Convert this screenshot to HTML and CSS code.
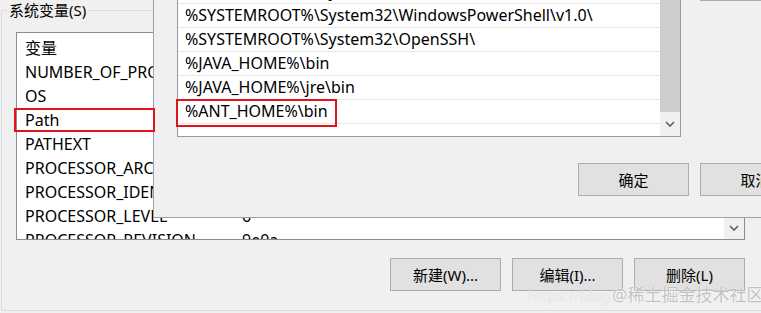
FILE: index.html
```html
<!DOCTYPE html>
<html lang="zh-CN">
  <head>
    <meta charset="UTF-8" />
    <title>环境变量</title>
    <link rel="stylesheet" href="styles.css">
  </head>
  <body>
    <div class="screen">
      <fieldset class="group">
        <legend>系统变量(S)</legend>
        <div class="varlist">
          <div class="vrows">
            <div class="vrow"><span class="name">变量</span><span class="val"></span></div>
            <div class="vrow"><span class="name">NUMBER_OF_PROCESSORS</span><span class="val"></span></div>
            <div class="vrow"><span class="name">OS</span><span class="val"></span></div>
            <div class="vrow"><span class="name">Path</span><span class="val"></span></div>
            <div class="vrow"><span class="name">PATHEXT</span><span class="val"></span></div>
            <div class="vrow"><span class="name">PROCESSOR_ARCHITECTURE</span><span class="val"></span></div>
            <div class="vrow"><span class="name">PROCESSOR_IDENTIFIER</span><span class="val"></span></div>
            <div class="vrow"><span class="name">PROCESSOR_LEVEL</span><span class="val">6</span></div>
            <div class="vrow"><span class="name">PROCESSOR_REVISION</span><span class="val">9e0a</span></div>
          </div>
          <div class="vscroll">
            <div class="track"></div>
            <div class="down">
              <svg width="10" height="6" viewBox="0 0 10 6"><path d="M1 1 L5 5 L9 1" fill="none" stroke="#606060" stroke-width="1.6"/></svg>
            </div>
          </div>
        </div>
        <div class="actions">
          <button class="btn">新建(W)...</button>
          <button class="btn">编辑(I)...</button>
          <button class="btn">删除(L)</button>
        </div>
      </fieldset>

      <div class="dialog">
        <div class="dlg-body">
          <div class="pathlist">
            <div class="prows">
              <div class="prow">%SYSTEMROOT%\System32\Wbem</div>
              <div class="prow">%SYSTEMROOT%\System32\WindowsPowerShell\v1.0\</div>
              <div class="prow">%SYSTEMROOT%\System32\OpenSSH\</div>
              <div class="prow">%JAVA_HOME%\bin</div>
              <div class="prow">%JAVA_HOME%\jre\bin</div>
              <div class="prow">%ANT_HOME%\bin</div>
              <div class="prow"></div>
            </div>
            <div class="pscroll">
              <div class="thumb"></div>
              <div class="down">
                <svg width="10" height="6" viewBox="0 0 10 6"><path d="M1 1 L5 5 L9 1" fill="none" stroke="#606060" stroke-width="1.6"/></svg>
              </div>
            </div>
          </div>
          <div class="side">
            <div class="side-btn"></div>
          </div>
        </div>
        <div class="dlg-foot">
          <button class="btn">确定</button>
          <button class="btn">取消</button>
        </div>
      </div>

      <div class="mark mark-path"></div>
      <div class="mark mark-ant"></div>

      <div class="watermark">https://blog<span>@稀土掘金技术社区</span></div>
    </div>
  </body>
</html>
```

FILE: styles.css
```css
body {
  margin: 0;
  background: #f0f0f0;
  font-family: "Noto Sans", "Noto Sans CJK SC", sans-serif;
  font-size: 15px;
  color: #000;
}
.screen {
  position: relative;
  width: 761px;
  height: 313px;
  overflow: hidden;
}
.group {
  box-sizing: border-box;
  margin: 0 0 0 1px;
  padding: 0;
  width: 800px;
  min-width: 0;
  height: 311px;
  border: 1px solid #dcdcdc;
}
.group legend {
  margin-left: 5px;
  padding: 0 2px;
  line-height: 20px;
}
.varlist {
  box-sizing: border-box;
  display: grid;
  grid-template-columns: 1fr 20px;
  margin: 12px 0 0 14px;
  width: 729px;
  height: 208px;
  border: 1px solid #8c8c8c;
  background: #fff;
}
.vrows {
  padding-top: 3px;
  overflow: hidden;
}
.vrow {
  display: grid;
  grid-template-columns: 225px 1fr;
  height: 24px;
  line-height: 24px;
  font-size: 16px;
  white-space: nowrap;
}
.vrow .name {
  padding-left: 8px;
  overflow: hidden;
}
.vscroll {
  display: flex;
  flex-direction: column;
  background: #f0f0f0;
}
.vscroll .track {
  flex: 1;
}
.down {
  display: flex;
  align-items: center;
  justify-content: center;
  height: 22px;
}
.actions {
  display: flex;
  justify-content: flex-end;
  gap: 11px;
  margin: 18px 0 0 14px;
  width: 729px;
}
.btn {
  box-sizing: border-box;
  flex-shrink: 0;
  width: 111px;
  height: 33px;
  padding: 0;
  border: 1px solid #adadad;
  background: #e1e1e1;
  font-family: inherit;
  font-size: 15px;
  color: #000;
}
.dialog {
  position: absolute;
  left: 153px;
  top: -33px;
  z-index: 1;
  box-sizing: border-box;
  width: 720px;
  height: 251px;
  border-left: 1px solid #a0a0a0;
  border-bottom: 1px solid #a0a0a0;
  background: #f0f0f0;
}
.dlg-body {
  display: flex;
  align-items: flex-start;
  height: 170px;
}
.pathlist {
  box-sizing: border-box;
  flex-shrink: 0;
  display: grid;
  grid-template-columns: 1fr 20px;
  margin: 12px 0 0 23px;
  width: 504px;
  height: 158px;
  border: 1px solid #9a9a9a;
  background: #fff;
}
.prows {
  overflow: hidden;
}
.prow {
  box-sizing: border-box;
  height: 24px;
  padding-left: 7px;
  line-height: 23px;
  font-size: 16px;
  border-bottom: 1px solid #e6e6e6;
  white-space: nowrap;
}
.pscroll {
  display: flex;
  flex-direction: column;
  background: #f0f0f0;
}
.pscroll .thumb {
  height: 132px;
  background: #cdcdcd;
}
.pscroll .down {
  flex: 1;
  height: auto;
}
.side {
  flex-shrink: 0;
  margin: 1px 0 0 19px;
}
.side-btn {
  box-sizing: border-box;
  width: 130px;
  height: 33px;
  border: 1px solid #adadad;
  background: #e1e1e1;
}
.dlg-foot {
  display: flex;
  gap: 11px;
  margin: 26px 0 0 424px;
}
.mark {
  position: absolute;
  z-index: 2;
  box-sizing: border-box;
  border: 2px solid #e0141c;
}
.mark-path {
  left: 14px;
  top: 108px;
  width: 141px;
  height: 24px;
}
.mark-ant {
  left: 176px;
  top: 99px;
  width: 161px;
  height: 28px;
}
.watermark {
  position: absolute;
  left: 528px;
  top: 281px;
  z-index: 3;
  font-size: 15px;
  color: rgba(255, 255, 255, 0.5);
  text-shadow: 0 0 1px rgba(170, 170, 170, 0.4);
  white-space: nowrap;
}
.watermark span {
  margin-left: 1px;
  font-size: 17px;
  color: rgba(140, 140, 140, 0.55);
  text-shadow: 0 0 1px #fff, 0 0 1px #fff;
}
```
